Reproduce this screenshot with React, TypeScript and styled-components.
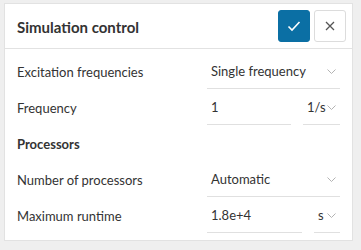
import React from "react";
import styled, { createGlobalStyle } from "styled-components";

const Global = createGlobalStyle`
  html, body { margin: 0; padding: 0; background: #efefef; }
  body { font-family: Lato, "Open Sans", sans-serif; color: #333; }
  * { box-sizing: border-box; }
`;

const Page = styled.div`
  padding: 3px 0 0 4px;
  width: 361px;
  height: 250px;
`;

const Card = styled.div`
  width: 349px;
  height: 238px;
  background: #fff;
  border: 1px solid #e2e2e2;
  display: flex;
  flex-direction: column;
`;

const Header = styled.div`
  height: 45px;
  display: flex;
  align-items: center;
  padding: 0 6px 0 12px;
  border-bottom: 1px solid #e2e2e2;
`;

const Title = styled.div`
  flex: 1;
  font-size: 15px;
  font-weight: 700;
  color: #333;
  padding-top: 1px;
`;

const IconButton = styled.button<{ $primary?: boolean }>`
  width: 32px;
  height: 32px;
  margin-left: 4px;
  border-radius: 3px;
  border: 1px solid ${(p) => (p.$primary ? "#0b6fa4" : "#dcdcdc")};
  background: ${(p) => (p.$primary ? "#0b6fa4" : "#fff")};
  display: flex;
  align-items: center;
  justify-content: center;
  padding: 0;
`;

const Body = styled.div`
  padding: 5px 12px 0 12px;
  display: flex;
  flex-direction: column;
`;

const Row = styled.div`
  height: 36px;
  display: flex;
  align-items: center;
`;

const Label = styled.div<{ $bold?: boolean }>`
  width: 190px;
  font-size: 13px;
  font-weight: ${(p) => (p.$bold ? 700 : 400)};
  color: #333;
`;

const Fields = styled.div`
  flex: 1;
  display: flex;
  gap: 12px;
  height: 34px;
`;

const Field = styled.div<{ $width?: number }>`
  ${(p) => (p.$width ? `width: ${p.$width}px; flex: none;` : "flex: 1;")}
  height: 34px;
  border-bottom: 1px solid #e0e0e0;
  display: flex;
  align-items: center;
  padding: 0 4px;
  font-size: 13px;
  color: #333;
  padding-bottom: 1px;
`;

const Value = styled.span`
  flex: 1;
  white-space: nowrap;
`;

const Chevron = () => (
  <svg width="9" height="5" viewBox="0 0 9 5" style={{ flex: "none" }}>
    <path d="M0.5 0.5 L4.5 4.5 L8.5 0.5" fill="none" stroke="#b3b3b3" strokeWidth="1" />
  </svg>
);

const Select = ({ value, width }: { value: string; width?: number }) => (
  <Field $width={width}>
    <Value>{value}</Value>
    <Chevron />
  </Field>
);

export default function App() {
  return (
    <>
      <Global />
      <Page>
        <Card>
          <Header>
            <Title>Simulation control</Title>
            <IconButton $primary aria-label="apply">
              <svg width="14" height="12" viewBox="0 0 14 12">
                <path d="M1.5 6.5 L5 10 L12.5 2" fill="none" stroke="#fff" strokeWidth="1.6" />
              </svg>
            </IconButton>
            <IconButton aria-label="close">
              <svg width="10" height="10" viewBox="0 0 10 10">
                <path d="M1 1 L9 9 M9 1 L1 9" fill="none" stroke="#555" strokeWidth="1.3" />
              </svg>
            </IconButton>
          </Header>
          <Body>
            <Row>
              <Label>Excitation frequencies</Label>
              <Fields>
                <Select value="Single frequency" />
              </Fields>
            </Row>
            <Row>
              <Label>Frequency</Label>
              <Fields>
                <Field>
                  <Value>1</Value>
                </Field>
                <Select value="1/s" width={37} />
              </Fields>
            </Row>
            <Row>
              <Label $bold>Processors</Label>
            </Row>
            <Row>
              <Label>Number of processors</Label>
              <Fields>
                <Select value="Automatic" />
              </Fields>
            </Row>
            <Row>
              <Label>Maximum runtime</Label>
              <Fields>
                <Field>
                  <Value>1.8e+4</Value>
                </Field>
                <Select value="s" width={26} />
              </Fields>
            </Row>
          </Body>
        </Card>
      </Page>
    </>
  );
}
